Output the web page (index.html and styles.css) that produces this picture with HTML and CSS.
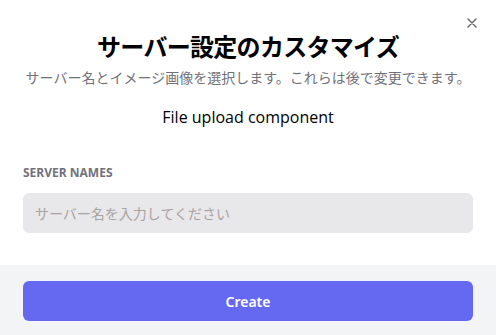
FILE: index.html
```html
<!DOCTYPE html>
<html lang="ja">
<head>
    <meta charset="UTF-8">
    <meta name="viewport" content="width=device-width, initial-scale=1.0">
    <title>サーバー設定のカスタマイズ</title>
    <link rel="stylesheet" href="styles.css">
</head>
<body>
    <div class="modal">
        <button class="close-button" aria-label="Close">
            <svg width="10" height="10" viewBox="0 0 10 10">
                <path d="M1 1 L9 9 M9 1 L1 9" stroke="currentColor" stroke-width="1.4" stroke-linecap="round" />
            </svg>
        </button>
        <div class="modal-header">
            <h1 class="modal-title">サーバー設定のカスタマイズ</h1>
            <p class="modal-description">サーバー名とイメージ画像を選択します。これらは後で変更できます。</p>
        </div>
        <div class="modal-body">
            <div class="upload-placeholder">File upload component</div>
            <label class="field-label" for="serverName">Server names</label>
            <input class="field-input" id="serverName" type="text" placeholder="サーバー名を入力してください">
        </div>
        <div class="modal-footer">
            <button class="button">Create</button>
        </div>
    </div>
</body>
</html>
```

FILE: styles.css
```css
body {
    font-family: "Open Sans", "Noto Sans CJK JP", sans-serif;
    margin: 0;
    padding: 0;
    background-color: #fff;
    color: #000;
}
.modal {
    position: relative;
    width: 100%;
    height: 335px;
    display: flex;
    flex-direction: column;
    overflow: hidden;
    background-color: #fff;
}
.close-button {
    position: absolute;
    top: 18px;
    right: 19px;
    width: 10px;
    height: 10px;
    padding: 0;
    border: none;
    background: none;
    color: #3f3f46;
    opacity: 0.8;
    display: flex;
}
.modal-header {
    padding: 30px 23px 0;
    text-align: center;
}
.modal-title {
    margin: 0;
    font-family: "Noto Sans CJK JP", sans-serif;
    font-size: 24px;
    line-height: 32px;
    font-weight: 700;
    letter-spacing: -0.7px;
}
.modal-description {
    margin: 5px 0 0;
    font-family: "Noto Sans CJK JP", sans-serif;
    font-size: 14px;
    line-height: 20px;
    color: #71717a;
}
.modal-body {
    padding: 0 23px;
    display: flex;
    flex-direction: column;
}
.upload-placeholder {
    margin-top: 18px;
    text-align: center;
    font-size: 16px;
    line-height: 24px;
}
.field-label {
    margin-top: 36px;
    font-size: 12px;
    line-height: 16px;
    font-weight: 700;
    text-transform: uppercase;
    color: #71717a;
}
.field-input {
    margin-top: 12px;
    height: 40px;
    box-sizing: border-box;
    padding: 0 12px;
    border: none;
    border-radius: 6px;
    background-color: #e8e8ea;
    font-family: "Noto Sans CJK JP", sans-serif;
    font-size: 14px;
    color: #000;
    outline: none;
}
.field-input::placeholder {
    color: #a8a3a3;
}
.modal-footer {
    margin-top: 32px;
    padding: 16px 23px;
    background-color: #f3f4f6;
    flex: 1;
}
.button {
    width: 100%;
    height: 40px;
    border: none;
    border-radius: 6px;
    background-color: #6569f1;
    color: #fff;
    font-family: "Noto Sans", sans-serif;
    font-size: 14px;
    font-weight: 600;
    cursor: pointer;
}
```
